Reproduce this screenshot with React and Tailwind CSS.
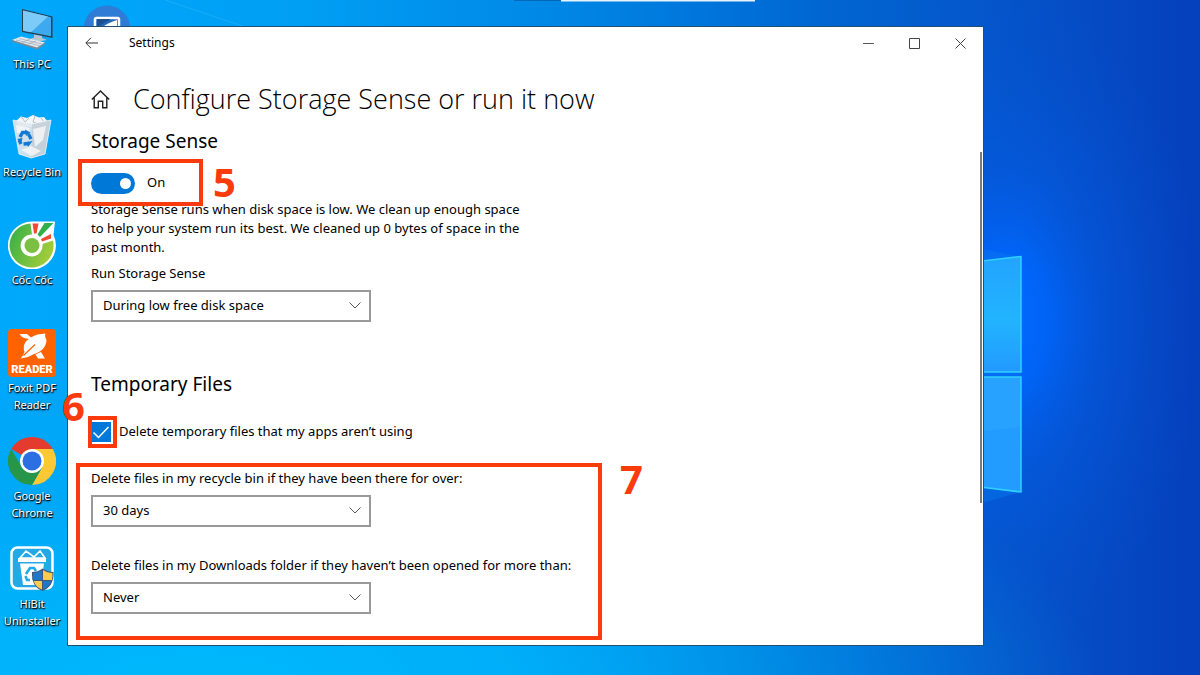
import React, { useState } from 'react';

function Wallpaper() {
  return (
    <svg
      className="absolute inset-0 w-full h-full"
      viewBox="0 0 1200 675"
      preserveAspectRatio="xMidYMid slice"
      aria-hidden="true"
    >
      <defs>
        <linearGradient id="sky" x1="0" y1="0" x2="1" y2="0">
          <stop offset="0" stopColor="#00a8fb" />
          <stop offset="0.25" stopColor="#009ff4" />
          <stop offset="0.48" stopColor="#0085e4" />
          <stop offset="0.68" stopColor="#0067d2" />
          <stop offset="0.83" stopColor="#0555ca" />
          <stop offset="1" stopColor="#053fbc" />
        </linearGradient>
        <radialGradient id="floor" gradientUnits="userSpaceOnUse" cx="0" cy="0" r="1" gradientTransform="translate(200 690) scale(900 330)">
          <stop offset="0" stopColor="#00b8fc" />
          <stop offset="0.35" stopColor="#00b2fa" stopOpacity="0.9" />
          <stop offset="1" stopColor="#00a0f0" stopOpacity="0" />
        </radialGradient>
        <radialGradient id="glow" gradientUnits="userSpaceOnUse" cx="0" cy="0" r="1" gradientTransform="translate(1005 320) scale(200 330)">
          <stop offset="0" stopColor="#006aff" />
          <stop offset="0.2" stopColor="#0066fc" stopOpacity="0.9" />
          <stop offset="0.45" stopColor="#045ce6" stopOpacity="0.55" />
          <stop offset="1" stopColor="#0550d0" stopOpacity="0" />
        </radialGradient>
        <linearGradient id="paneTop" x1="0" y1="0" x2="0" y2="1">
          <stop offset="0" stopColor="#22a4ff" />
          <stop offset="0.55" stopColor="#22b4ff" />
          <stop offset="1" stopColor="#2299ff" />
        </linearGradient>
      </defs>
      <rect width="1200" height="675" fill="url(#sky)" />
      <rect width="1200" height="675" fill="url(#floor)" />
      <rect x="780" width="420" height="675" fill="url(#glow)" />
      <path d="M165 0 L290 42" stroke="#3dbcff" opacity="0.4" />
      <path d="M940 240 L1021 257 V492 L940 515 Z" fill="#0878ee" opacity="0.45" />
      <path d="M940 266 L1021 256.500 V372 H940 Z" fill="url(#paneTop)" />
      <path d="M940 377 H1021 V492 L940 481 Z" fill="#229cff" />
      <path d="M940 436 L1021 427 V377 H940 Z" fill="#2aa6ff" opacity="0.7" />
      <path d="M940 266 L1021 256.500 V372 H940" fill="none" stroke="#2fd0ff" strokeWidth="1.500" />
      <path d="M940 377 H1021 V492 L940 482" fill="none" stroke="#2fd0ff" strokeWidth="1.500" />
      <rect x="514" width="47" height="1" fill="#0567b8" />
      <rect x="561" width="194" height="1.500" fill="#e6f3fb" />
    </svg>
  );
}

const ThisPcIcon = () => (
  <svg viewBox="0 0 48 48" className="size-12" aria-hidden="true">
    <path d="M14 4 L44.500 11.500 V33 L14 27 Z" fill="#2c3e50" />
    <path d="M15 5.500 L43 12.300 V31.200 L15 25.800 Z" fill="#3da9ee" />
    <path d="M15 5.500 L40 11.600 L23 27.300 L15 25.800 Z" fill="#7ccbf8" />
    <path d="M26 29.500 L34 31 V33 L39 35 L30 36.500 L22 34 L26 32.500 Z" fill="#b9c6cf" />
    <path d="M4 35 L13 31.500 L37 37.500 L29 43.500 Z" fill="#e3e8ec" />
    <path d="M4 35 L29 42.500 L37 37.500 V39 L29 44.500 L4 36.500 Z" fill="#7d8b96" />
    <path d="M8 35 L32 40.800 M11 33.500 L34 39 M14 37.500 L22 34 M20 39 L28 36" stroke="#9aa7b1" strokeWidth="0.700" />
  </svg>
);

const RecycleBinIcon = () => (
  <svg viewBox="0 0 48 48" className="size-12" aria-hidden="true">
    <path d="M8 8 L13 3.500 L19 5 L25 2 L31 4.500 L36 4 L40 9 L38 14 H10 Z" fill="#f4f5f7" />
    <path d="M13 3.500 L17 9 L21 5 M27 3 L25 9 L33 12 M33 5 L36 9" stroke="#b4c0c8" fill="none" />
    <path d="M5 7 L24 11 L43 7 L37 41 L23 45 L11 41 Z" fill="#dfe6eb" fillOpacity="0.92" />
    <path d="M24 11 L43 7 L37 41 L23 45 Z" fill="#c3ced6" fillOpacity="0.85" />
    <path d="M8 12 L22 15 L20 22 L9 20 Z M25 16 L38 13 L35 27 L27 34 Z M13 37 L23 33 L33 38 L24 43 Z" fill="#f7f9fa" opacity="0.8" />
    <path d="M5 7 L24 11 L43 7 M5 7 L11 41 L23 45 L37 41 L43 7" stroke="#e9f3fa" fill="none" strokeWidth="0.800" />
    <g fill="none" stroke="#1479d4" strokeWidth="3.400">
      <path d="M12 24 L14.500 19.500 H18" />
      <path d="M20.500 21 L23 26" />
      <path d="M21 30.500 L15.500 31" />
      <path d="M13 31 L11 27" />
    </g>
    <path d="M17 16.500 L22.500 19.500 L18 23 Z M24.500 28 L20 34 L18.500 29 Z M9 26 L14.500 25 L13.500 29 Z" fill="#1479d4" />
  </svg>
);

const CocCocIcon = () => (
  <svg viewBox="0 0 48 48" className="size-12" aria-hidden="true">
    <defs>
      <linearGradient id="cc" x1="0" y1="0" x2="1" y2="0.400">
        <stop offset="0" stopColor="#2fae4a" />
        <stop offset="1" stopColor="#9fcb3b" />
      </linearGradient>
    </defs>
    <path d="M24 0.500 H47 L45.500 14 A24 24 0 1 1 24 0.500 Z" fill="#fff" />
    <path d="M22.500 2.500 L24 13.500 A11 11 0 1 0 34.500 23 L45 19.500 A22 22 0 1 1 22.500 2.500 Z" fill="url(#cc)" />
    <circle cx="24" cy="24.500" r="7.500" fill="#7cc043" />
    <path d="M24.500 2.500 L30.500 2.500 L28.500 12.500 L26 12.500 Z" fill="#ee4b32" />
    <path d="M36.500 2 H45.500 L32 16 L29.500 13.500 Z" fill="#2fae4a" />
    <path d="M43 13 L43 17.500 L34 20.500 L33 18 Z" fill="#ee4b32" />
  </svg>
);

const FoxitIcon = () => (
  <svg viewBox="0 0 48 48" className="size-12" aria-hidden="true">
    <rect width="48" height="48" rx="4" fill="#ff6200" />
    <path d="M11.500 5 H19 L23 8.500 C27 5.500 32 5 37.500 4.500 C36.500 7 37.500 9 38.500 11 C38.500 19 31 24 26 25 L20 28 L12.500 29.500 C15 27 15.500 25 16.500 23 C14.500 17 17 12 21 10 C17 9.500 14 9 11.500 5 Z" fill="#fff" />
    <path d="M27.500 25.500 L33 23 L37 29.500 H30 Z" fill="#fff" />
    <path d="M15.500 26.500 L27 15.500" stroke="#ff6200" strokeWidth="1.200" />
    <text x="24" y="44" textAnchor="middle" fill="#fff" className="font-['Roboto',sans-serif] text-[11px] font-black">READER</text>
  </svg>
);

const ChromeIcon = () => (
  <svg viewBox="0 0 48 48" className="size-12" aria-hidden="true">
    <path d="M24 24 L3.200 12 A24 24 0 0 1 44.800 12 Z" fill="#e33b2e" />
    <path d="M24 12 H44.800 A24 24 0 0 1 24 48 L34.400 30 Z" fill="#fcc934" />
    <path d="M3.200 12 L13.600 30 L34.400 30 L24 48 A24 24 0 0 1 3.200 12 Z" fill="#27964a" />
    <path d="M24 12 H44.800 L34.400 30 L24 24 Z" fill="#fcc934" />
    <circle cx="24" cy="24" r="12" fill="#fff" />
    <circle cx="24" cy="24" r="9.500" fill="#2b6fe3" />
  </svg>
);

const HiBitIcon = () => (
  <svg viewBox="0 0 48 48" className="size-12" aria-hidden="true">
    <rect x="3.500" y="2.500" width="41" height="41" rx="6" fill="#22a9e6" stroke="#fff" strokeWidth="2.500" />
    <path d="M12 13 L18 6 L26 12 L32 6 L37 13 Z" fill="#22a9e6" stroke="#fff" strokeWidth="1.600" />
    <path d="M10 13 H38 V17 H10 Z M12 18.500 H36 L33 40 H15 Z" fill="#fff" />
    <path d="M18 29 L22 23 H26 L28 26 M28 30 L25 35 M22 35 H19 L17.500 31" fill="none" stroke="#22a9e6" strokeWidth="2.600" />
    <path d="M34.500 23.500 C38 26 42 27 45.500 27 C46 37 42 43 34.500 46 C27 43 23.500 37 24 27 C28 27 31.500 26 34.500 23.500 Z" fill="#3e5a78" />
    <path d="M34 25 V35 H25.500 C25 32 25 30 25.200 28 C28 28 31 27 34 25 Z" fill="#2276c9" />
    <path d="M35 25 C38 27 41 28 44.300 28 C44.500 30 44.500 32 44 35 H35 Z" fill="#fdcb50" />
    <path d="M25.700 36 H34 V44.500 C29.500 43 27 40 25.700 36 Z" fill="#fdcb50" />
    <path d="M35 36 H43.600 C42 40 39.500 43 35 44.500 Z" fill="#2276c9" />
  </svg>
);

const shortcuts = [
  { name: 'This PC', Icon: ThisPcIcon },
  { name: 'Recycle Bin', Icon: RecycleBinIcon },
  { name: 'Cốc Cốc', Icon: CocCocIcon },
  { name: 'Foxit PDF Reader', Icon: FoxitIcon },
  { name: 'Google Chrome', Icon: ChromeIcon },
  { name: 'HiBit Uninstaller', Icon: HiBitIcon },
];

function Shortcut({ name, Icon }) {
  return (
    <button className="flex h-[108px] w-16 flex-col items-center gap-0.5 px-0.5">
      <Icon />
      <span className="text-center text-[11px] leading-[17px] text-white [text-shadow:0_1px_2px_#000,1px_1px_1px_#000]">
        {name}
      </span>
    </button>
  );
}

function Dropdown({ id, label, options }) {
  return (
    <div className="flex flex-col gap-[7px]">
      <label htmlFor={id} className="leading-[19px]">{label}</label>
      <div className="relative w-[280px]">
        <select id={id} className="h-8 w-full appearance-none border-2 border-[#999] bg-white pl-[10px] pr-8">
          {options.map(o => <option key={o}>{o}</option>)}
        </select>
        <svg viewBox="0 0 12 7" className="pointer-events-none absolute right-[10px] top-3 h-[7px] w-3" fill="none" stroke="#555">
          <path d="M0.500 0.500 L6 6 L11.500 0.500" />
        </svg>
      </div>
    </div>
  );
}

export default function App() {
  const [on, setOn] = useState(true);
  const [deleteTemp, setDeleteTemp] = useState(true);

  return (
    <div className="relative min-h-screen overflow-hidden bg-[#0078d7] font-['Noto_Sans','Open_Sans',sans-serif] text-[13px] text-black">
      <Wallpaper />

      {/* shortcut half covered by the window */}
      <svg viewBox="0 0 48 48" className="absolute left-[83px] top-[5px] size-12" aria-hidden="true">
        <circle cx="24" cy="24" r="23.500" fill="#2f7cd6" />
        <rect x="12" y="13" width="24" height="18" rx="1.500" fill="#2466b8" stroke="#fff" strokeWidth="2.500" />
        <path d="M14 22 L28 14 H14 Z" fill="#1d4f93" />
        <path d="M14 30 C18 20 26 18 34 15 V30 Z" fill="#fff" />
      </svg>

      <div className="relative flex items-start gap-[3px]">
        <nav className="flex w-16 shrink-0 flex-col pt-[5px]">
          {shortcuts.map(s => <Shortcut key={s.name} {...s} />)}
        </nav>

        <main className="relative mt-[26px] mr-[18%] min-w-0 flex-1 border border-[#24506f] bg-white pb-[31px]">
          <header className="flex h-8 items-center text-[12px]">
            <button aria-label="Back" className="ml-[17px]">
              <svg viewBox="0 0 13 12" className="h-3 w-[13px]" fill="none" stroke="#333">
                <path d="M13 6 H1 M6 0.800 L0.800 6 L6 11.200" />
              </svg>
            </button>
            <span className="ml-[31px] flex-1">Settings</span>
            <button aria-label="Minimize" className="flex h-8 w-[46px] items-center justify-center">
              <svg viewBox="0 0 11 11" className="size-[11px]" stroke="#555"><path d="M0 5.500 H11" /></svg>
            </button>
            <button aria-label="Maximize" className="flex h-8 w-[46px] items-center justify-center">
              <svg viewBox="0 0 11 11" className="size-[11px]" fill="none" stroke="#444"><path d="M0.500 0.500 H10.500 V10.500 H0.500 Z" /></svg>
            </button>
            <button aria-label="Close" className="flex h-8 w-[46px] items-center justify-center">
              <svg viewBox="0 0 11 11" className="size-[11px]" stroke="#444"><path d="M0.500 0.500 L10.500 10.500 M10.500 0.500 L0.500 10.500" /></svg>
            </button>
          </header>

          <div className="px-[23px]">
            <div className="flex items-center gap-[23px] pt-5">
              <svg viewBox="0 0 19 19" className="size-[19px]" fill="none" stroke="#222" strokeWidth="1.400">
                <path d="M0.800 9.500 L9.500 1 L18.200 9.500 M3.200 7.500 V17.800 H7.300 V11.300 H11.700 V17.800 H15.800 V7.500" />
              </svg>
              <h1 className="font-['Open_Sans','Noto_Sans',sans-serif] text-[27px] leading-10 font-light">Configure Storage Sense or run it now</h1>
            </div>

            <h2 className="mt-2 text-[19px] leading-7">Storage Sense</h2>

            <div className="relative mt-4 flex h-6 w-fit items-center">
              <label className="flex items-center gap-3">
                <input
                  type="checkbox"
                  role="switch"
                  checked={on}
                  onChange={e => setOn(e.target.checked)}
                  className="peer sr-only"
                />
                <span className="flex h-[21px] w-11 items-center justify-start rounded-full bg-[#999] px-1 peer-checked:justify-end peer-checked:bg-[#0078d7]">
                  <span className="size-[11px] rounded-full bg-white" />
                </span>
                {on ? 'On' : 'Off'}
              </label>
              <div className="pointer-events-none absolute -left-[13px] -top-3 z-10 h-[47px] w-[125px] border-4 border-[#fb3b0b]" />
              <span className="absolute left-[122px] -top-[7px] text-[40px] leading-9 font-bold text-[#fb3b0b]">5</span>
            </div>

            <p className="mt-[5px] w-[440px] leading-[19px]">
              Storage Sense runs when disk space is low. We clean up enough space to help your system run its best. We cleaned up 0 bytes of space in the past month.
            </p>

            <div className="mt-[7px]">
              <Dropdown
                id="run"
                label="Run Storage Sense"
                options={['During low free disk space', 'Every day', 'Every week', 'Every month']}
              />
            </div>

            <h2 className="mt-12 text-[19px] leading-7">Temporary Files</h2>

            <div className="relative mt-6 flex h-5 items-center">
              <label className="flex items-center gap-2">
                <span className="relative size-5">
                  <input
                    type="checkbox"
                    checked={deleteTemp}
                    onChange={e => setDeleteTemp(e.target.checked)}
                    className="block size-5 appearance-none border-2 border-[#333] checked:border-[#0078d7] checked:bg-[#0078d7]"
                  />
                  {deleteTemp && (
                    <svg viewBox="0 0 20 20" className="pointer-events-none absolute inset-0" fill="none" stroke="#fff" strokeWidth="1.500">
                      <path d="M2.500 10.500 L7.500 15.500 L17.500 5" />
                    </svg>
                  )}
                </span>
                Delete temporary files that my apps aren’t using
              </label>
              <div className="pointer-events-none absolute -left-[3px] -top-1.5 h-8 w-[29px] border-4 border-[#fb3b0b]" />
              <span className="absolute -left-[29px] -top-[34px] text-[40px] leading-9 font-bold text-[#fb3b0b]">6</span>
            </div>

            <div className="relative mt-[27px] flex flex-col gap-[29px]">
              <Dropdown
                id="bin"
                label="Delete files in my recycle bin if they have been there for over:"
                options={['30 days', '1 day', '14 days', '60 days', 'Never']}
              />
              <Dropdown
                id="downloads"
                label="Delete files in my Downloads folder if they haven’t been opened for more than:"
                options={['Never', '1 day', '14 days', '30 days', '60 days']}
              />
              <div className="pointer-events-none absolute -left-[15px] -top-1.5 h-[177px] w-[526px] border-4 border-[#fb3b0b]" />
              <span className="absolute left-[529px] -top-2 text-[40px] leading-9 font-bold text-[#fb3b0b]">7</span>
            </div>
          </div>

          <div className="absolute right-px top-[125px] h-[351px] w-0.5 bg-[#7a7a7a]" />
        </main>
      </div>
    </div>
  );
}
